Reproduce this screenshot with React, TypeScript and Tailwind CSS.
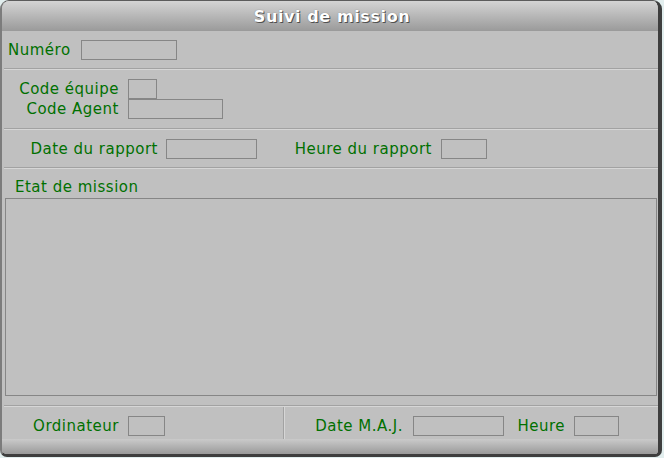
import React from "react";

const Label = ({ children, className = "" }: { children: React.ReactNode; className?: string }) => (
  <div className={`text-[15px] leading-[18px] tracking-[0.5px] text-[#007000] whitespace-nowrap ${className}`}>{children}</div>
);

const Field = ({ w }: { w: string }) => (
  <div className={`h-[20px] border border-[#868686] bg-[#c0c0c0] ${w}`} />
);

const Sep = () => (
  <div className="ml-[2px] flex flex-col">
    <div className="h-px bg-[#a2a2a2]" />
    <div className="h-px bg-[#d6d6d6]" />
  </div>
);

export default function App() {
  return (
    <div className="w-[664px] h-[458px] bg-[#e2eeee] font-['DejaVu_Sans',sans-serif]">
      <div className="w-[662px] h-[457px] flex flex-col overflow-hidden rounded-t-[9px] rounded-b-[7px] border-t border-t-[#5c5c5c] border-l-2 border-l-[#7c7c7c] border-r-[4px] border-r-[#3e3e3e] border-b-[3px] border-b-[#3e3e3e] bg-[#c0c0c0]">
        {/* Title bar */}
        <div className="h-[30px] pt-[2px] pl-[4px] flex items-center justify-center bg-[linear-gradient(#d4d4d4,#b4b4b4_55%,#9a9a9a)]">
          <span className="text-[16px] font-bold tracking-[0.6px] text-white [text-shadow:1px_1px_0_#505050,0_0_1px_#707070]">
            Suivi de mission
          </span>
        </div>

        {/* Section 1 */}
        <div className="h-[37px] flex items-center">
          <div className="w-[79px] pl-[6px]"><Label>Numéro</Label></div>
          <Field w="w-[96px]" />
        </div>
        <Sep />

        {/* Section 2 */}
        <div className="h-[58px] pt-[9px] flex flex-col">
          <div className="h-[20px] flex items-center">
            <div className="w-[126px] pr-[9px] flex justify-end"><Label>Code équipe</Label></div>
            <Field w="w-[29px]" />
          </div>
          <div className="h-[20px] flex items-center">
            <div className="w-[126px] pr-[9px] flex justify-end"><Label>Code Agent</Label></div>
            <Field w="w-[95px]" />
          </div>
        </div>
        <Sep />

        {/* Section 3 */}
        <div className="h-[37px] pt-[9px] flex items-start">
          <div className="h-[20px] w-[164px] pr-[8px] flex items-center justify-end"><Label>Date du rapport</Label></div>
          <Field w="w-[91px]" />
          <div className="h-[20px] w-[184px] pr-[9px] flex items-center justify-end"><Label>Heure du rapport</Label></div>
          <Field w="w-[46px]" />
        </div>
        <Sep />

        {/* Section 4 */}
        <div className="h-[236px] flex flex-col">
          <div className="h-[29px] pt-[9px] pl-[13px]"><Label>Etat de mission</Label></div>
          <div className="ml-[3px] w-[652px] h-[198px] border border-[#868686] bg-[#c0c0c0]" />
        </div>
        <Sep />

        {/* Bottom section */}
        <div className="h-[32px] flex">
          <div className="w-[281px] pt-[9px] flex items-start">
            <div className="h-[20px] w-[126px] pr-[9px] flex items-center justify-end"><Label>Ordinateur</Label></div>
            <Field w="w-[37px]" />
          </div>
          <div className="w-px bg-[#a2a2a2]" />
          <div className="w-px bg-[#d6d6d6]" />
          <div className="flex-1 pt-[9px] flex items-start">
            <div className="h-[20px] w-[128px] pr-[10px] flex items-center justify-end"><Label>Date M.A.J.</Label></div>
            <Field w="w-[91px]" />
            <div className="h-[20px] w-[70px] pr-[9px] flex items-center justify-end"><Label>Heure</Label></div>
            <Field w="w-[45px]" />
          </div>
        </div>

        {/* Bottom bar */}
        <div className="flex-1 bg-[linear-gradient(#cacaca,#b2b2b2_50%,#9a9a9a)]" />
      </div>
    </div>
  );
}
